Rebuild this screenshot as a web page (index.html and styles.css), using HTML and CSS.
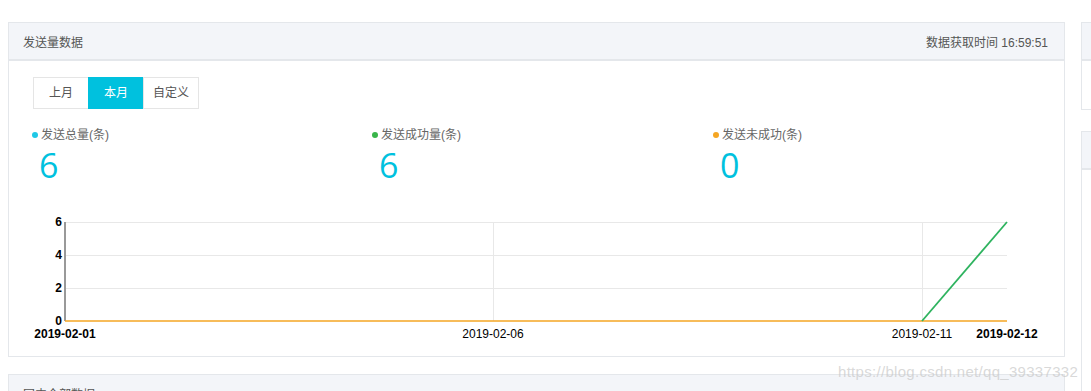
FILE: index.html
```html
<!DOCTYPE html>
<html lang="zh">
<head>
    <meta charset="UTF-8">
    <title>发送量数据</title>
    <link rel="stylesheet" href="styles.css">
</head>
<body>
    <div class="page">
        <div class="main-col">
            <div class="panel">
                <div class="panel-head">
                    <span>发送量数据</span>
                    <span class="fetch-time">数据获取时间 16:59:51</span>
                </div>
                <div class="panel-body">
                    <div class="tabs">
                        <span class="tab">上月</span>
                        <span class="tab active">本月</span>
                        <span class="tab">自定义</span>
                    </div>

                    <div class="stats">
                        <div class="stat">
                            <div class="stat-label"><i class="dot dot-cyan"></i>发送总量(条)</div>
                            <div class="stat-num">6</div>
                        </div>
                        <div class="stat">
                            <div class="stat-label"><i class="dot dot-green"></i>发送成功量(条)</div>
                            <div class="stat-num">6</div>
                        </div>
                        <div class="stat">
                            <div class="stat-label"><i class="dot dot-orange"></i>发送未成功(条)</div>
                            <div class="stat-num">0</div>
                        </div>
                    </div>

                    <!-- chart: page coords minus (9, 210) -->
                    <svg class="chart" width="1055" height="135" viewBox="0 0 1055 135">
                        <g stroke="#e8e8e8" stroke-width="1">
                            <line x1="56" y1="11.5" x2="998" y2="11.5"/>
                            <line x1="56" y1="44.5" x2="998" y2="44.5"/>
                            <line x1="56" y1="77.5" x2="998" y2="77.5"/>
                            <line x1="484.5" y1="11" x2="484.5" y2="110"/>
                            <line x1="913.5" y1="11" x2="913.5" y2="110"/>
                        </g>
                        <line x1="56" y1="11" x2="56" y2="110" stroke="#999" stroke-width="2"/>
                        <line x1="56" y1="110" x2="998" y2="110" stroke="#f5a623" stroke-width="1.5"/>
                        <line x1="913" y1="110" x2="998" y2="11" stroke="#2eb35f" stroke-width="1.8"/>
                        <g class="ylab" text-anchor="end">
                            <text x="53" y="15">6</text>
                            <text x="53" y="48">4</text>
                            <text x="53" y="81">2</text>
                            <text x="53" y="114">0</text>
                        </g>
                        <g class="xlab" text-anchor="middle">
                            <text x="56" y="127" class="bold">2019-02-01</text>
                            <text x="484" y="127">2019-02-06</text>
                            <text x="913" y="127">2019-02-11</text>
                            <text x="998" y="127" class="bold">2019-02-12</text>
                        </g>
                    </svg>
                </div>
            </div>

            <div class="panel">
                <div class="panel-head">
                    <span>国内全部数据</span>
                </div>
            </div>
        </div>

        <div class="side-col">
            <div class="panel side-small">
                <div class="panel-head"></div>
            </div>
            <div class="panel side-big">
                <div class="panel-head"></div>
            </div>
        </div>
    </div>

    <div class="watermark">https://blog.csdn.net/qq_39337332</div>
</body>
</html>
```

FILE: styles.css
```css
* {
    box-sizing: border-box;
}
body {
    margin: 0;
    background: #fff;
    font-family: "Liberation Sans", "Noto Sans CJK SC", sans-serif;
    color: #555;
    overflow: hidden;
    height: 391px;
    position: relative;
}
.page {
    display: flex;
    gap: 16px;
    padding: 22px 0 0 8px;
}
.main-col {
    width: 1057px;
    flex-shrink: 0;
    display: flex;
    flex-direction: column;
    gap: 17px;
}
.side-col {
    width: 300px;
    flex-shrink: 0;
    display: flex;
    flex-direction: column;
    gap: 21px;
}
.panel {
    border: 1px solid #e4e7eb;
    background: #fff;
}
.panel-head {
    height: 38px;
    background: #f3f5f9;
    border-bottom: 2px solid #e4e7eb;
    display: flex;
    justify-content: space-between;
    align-items: center;
    padding: 0 16px 0 14px;
    font-size: 12px;
    color: #555;
}
.panel-body {
    padding: 16px 0 0 0;
    height: 295px;
}
.tabs {
    display: flex;
    margin-left: 24px;
}
.tab {
    width: 56px;
    height: 32px;
    display: flex;
    align-items: center;
    justify-content: center;
    padding-bottom: 3px;
    font-size: 12px;
    color: #555;
    border: 1px solid #e5e5e5;
    margin-left: -1px;
}
.tab:first-child {
    margin-left: 0;
}
.tab.active {
    background: #00c1de;
    border-color: #00c1de;
    color: #fff;
}
.stats {
    display: flex;
    margin-top: 18px;
    padding-left: 23px;
}
.stat {
    width: 340px;
}
.stat:nth-child(2) {
    width: 341px;
}
.stat-label {
    display: flex;
    align-items: center;
    font-size: 12px;
    line-height: 16px;
    color: #666;
}
.dot {
    width: 6px;
    height: 6px;
    border-radius: 50%;
    margin-right: 3px;
}
.dot-cyan { background: #1fc8e6; }
.dot-green { background: #39b54a; }
.dot-orange { background: #f5a623; }
.stat-num {
    font-family: "Open Sans", sans-serif;
    font-size: 34px;
    line-height: 40px;
    color: #00c1de;
    padding-left: 7px;
    margin-top: 2px;
}
.chart {
    display: block;
    margin-top: 26px;
}
.ylab text {
    font-family: "Liberation Sans", sans-serif;
    font-size: 12px;
    font-weight: bold;
    fill: #000;
}
.xlab text {
    font-family: "Liberation Sans", sans-serif;
    font-size: 12px;
    fill: #000;
}
.xlab .bold {
    font-weight: bold;
}
.side-small {
    height: 88px;
}
.side-big {
    height: 300px;
}
.watermark {
    position: absolute;
    left: 838px;
    top: 363px;
    font-family: "Liberation Sans", sans-serif;
    font-size: 15px;
    color: rgba(200, 200, 200, 0.7);
    letter-spacing: 0.3px;
}
```
